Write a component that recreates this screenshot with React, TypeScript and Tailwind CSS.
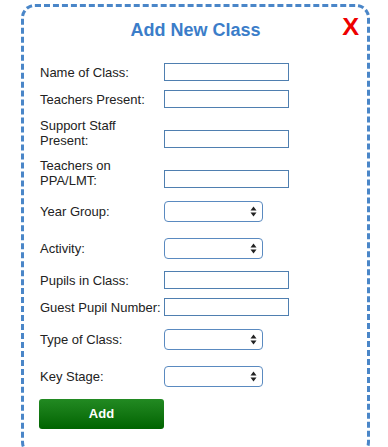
const font = { fontFamily: '"Liberation Sans", Arial, Helvetica, sans-serif' };

function TextBox() {
  return <div className="h-[18px] w-[125px] border border-[#4f7fb0] bg-white" />;
}

function SelectBox() {
  return (
    <div className="flex h-[21px] w-[99px] items-center justify-end rounded-[4px] border border-[#5a8ac0] bg-white pr-[5px]">
      <svg width="7" height="11" viewBox="0 0 7 11">
        <path d="M3.5 0.5 L6.5 4.5 L0.5 4.5 Z" fill="#222" />
        <path d="M3.5 10.5 L6.5 6.5 L0.5 6.5 Z" fill="#222" />
      </svg>
    </div>
  );
}

type Row = { label: React.ReactNode; kind: "text" | "select"; mt: string; lines?: 2 };

const rows: Row[] = [
  { label: "Name of Class:", kind: "text", mt: "mt-[22px]" },
  { label: "Teachers Present:", kind: "text", mt: "mt-[9px]" },
  { label: <>Support Staff<br />Present:</>, kind: "text", mt: "mt-[10px]", lines: 2 },
  { label: <>Teachers on<br />PPA/LMT:</>, kind: "text", mt: "mt-[10px]", lines: 2 },
  { label: "Year Group:", kind: "select", mt: "mt-[13px]" },
  { label: "Activity:", kind: "select", mt: "mt-[16px]" },
  { label: "Pupils in Class:", kind: "text", mt: "mt-[12px]" },
  { label: "Guest Pupil Number:", kind: "text", mt: "mt-[9px]" },
  { label: "Type of Class:", kind: "select", mt: "mt-[13px]" },
  { label: "Key Stage:", kind: "select", mt: "mt-[16px]" },
];

export default function App() {
  return (
    <div className="h-[447px] w-[388px] overflow-hidden bg-white" style={font}>
      <div className="relative ml-[21px] mt-[4px] h-[452px] w-[349px] rounded-[14px] border-[3px] border-dashed border-[#4a86c8] px-[16px] pt-[13px]">
        <span className="absolute right-[9px] top-[9px] scale-x-110 text-[23px] font-bold leading-none text-[#ee0000]">X</span>

        <h2 className="text-center text-[18px] font-bold leading-[21px] text-[#3b7dc9]">Add New Class</h2>

        {rows.map((r, i) => (
          <div
            key={i}
            className={`flex ${r.mt} ${r.lines === 2 ? "items-end" : "items-center"}`}
          >
            <label className="w-[124px] text-[13px] leading-[15px] text-[#222]">{r.label}</label>
            {r.kind === "text" ? <TextBox /> : <SelectBox />}
          </div>
        ))}

        <button className="mt-[12px] h-[30px] w-[125px] -translate-x-px rounded-[3px] bg-gradient-to-b from-[#228a22] to-[#006400] text-[13px] font-bold text-white">
          Add
        </button>
      </div>
    </div>
  );
}
